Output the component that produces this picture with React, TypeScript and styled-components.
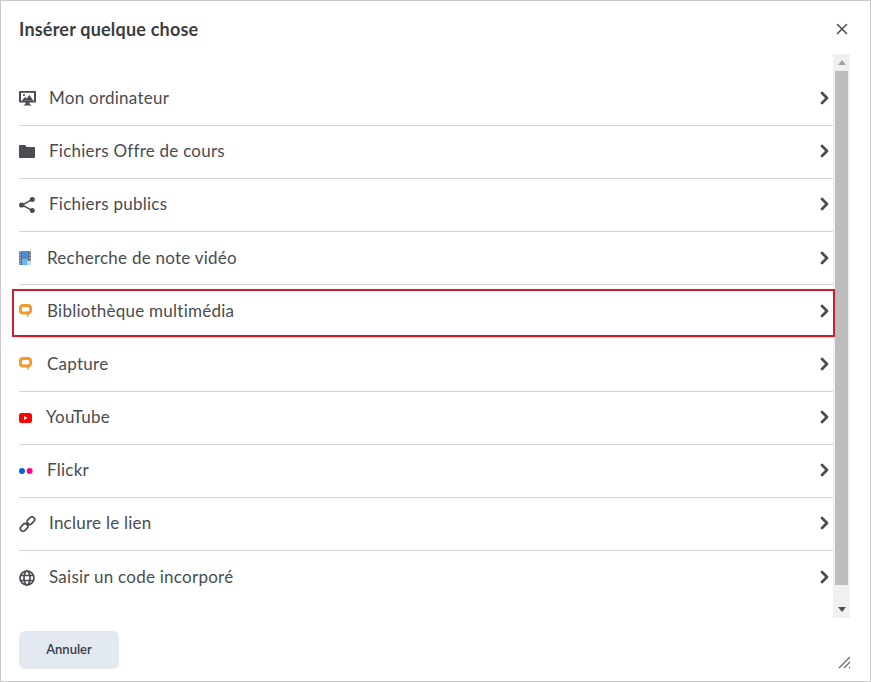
import React from "react";
import styled, { createGlobalStyle } from "styled-components";
import { X } from "lucide-react";

const Global = createGlobalStyle`
  html, body { margin: 0; padding: 0; background: #fff; }
  body { font-family: "Lato", "Liberation Sans", sans-serif; }
`;

const Dialog = styled.div`
  box-sizing: border-box;
  width: 871px;
  height: 682px;
  border: 1px solid #c9c9c9;
  background: #fff;
  display: flex;
  flex-direction: column;
  position: relative;
`;
const Header = styled.header`
  height: 53px;
  padding: 0 18px;
  display: flex;
  align-items: center;
  justify-content: space-between;
`;
const Title = styled.h1`
  margin: 2px 0 0;
  font-size: 18px;
  font-weight: 700;
  letter-spacing: 0.2px;
  color: #3a3d41;
`;
const Close = styled.button`
  border: 0;
  background: none;
  padding: 0;
  margin: 2px 1px 0 0;
  display: flex;
  color: #494c50;
`;
const Body = styled.div`
  height: 564px;
  padding-left: 18px;
  padding-right: 20px;
  display: flex;
`;
const List = styled.ul`
  flex: 1;
  margin: 0;
  padding: 18.58px 0 0;
  list-style: none;
`;
const Row = styled.li`
  box-sizing: border-box;
  height: 53.167px;
  display: flex;
  align-items: center;
  padding-right: 1px;
  border-bottom: 1px solid #cdd5dc;
  &:last-child { border-bottom: 0; }
`;
const IconSlot = styled.span<{ $w: number }>`
  width: ${(p) => p.$w}px;
  flex: none;
  display: flex;
  align-items: center;
`;
const Label = styled.span`
  flex: 1;
  font-size: 17px;
  line-height: 20px;
  letter-spacing: 0.25px;
  color: #494c4f;
  margin-top: -1.16px;
`;
const Chevron = styled.svg`
  display: block;
  flex: none;
  margin-top: -1px;
`;
const ChevronGap = styled.span`
  width: 3px;
  flex: none;
`;
const Scrollbar = styled.div`
  box-sizing: border-box;
  width: 17px;
  flex: none;
  background: #f0f0f0;
  display: flex;
  flex-direction: column;
  align-items: center;
`;
const ScrollArrow = styled.div`
  height: 17px;
  display: flex;
  align-items: center;
  justify-content: center;
  flex: none;
`;
const Thumb = styled.div`
  width: 13px;
  flex: 1;
  background: #bdbdbd;
  margin-bottom: 16px;
`;
const Footer = styled.footer`
  flex: 1;
  padding: 13px 18px 0;
  display: flex;
  align-items: flex-start;
  position: relative;
`;
const CancelButton = styled.button`
  width: 100px;
  height: 38px;
  border: 0;
  border-radius: 6px;
  background: #e3e9f1;
  font-family: "Lato", sans-serif;
  font-size: 13px;
  font-weight: 600;
  color: #3a3d41;
  padding-bottom: 3px;
`;
const Grip = styled.svg`
  position: absolute;
  right: 19px;
  bottom: 12px;
`;
const Highlight = styled.div`
  position: absolute;
  left: 11px;
  top: 288px;
  width: 823px;
  height: 48px;
  box-sizing: border-box;
  border: 2px solid #c8202c;
  pointer-events: none;
`;

const Monitor = () => (
  <svg width="17" height="15" viewBox="0 0 17 15">
    <path fill="#494c50" d="M1 0h15a1 1 0 0 1 1 1v9.500a1 1 0 0 1-1 1h-5.500v1.500l2.500 1.500H4l2.500-1.500v-1.500H1a1 1 0 0 1-1-1V1a1 1 0 0 1 1-1z" />
    <path fill="#fff" d="M2 1.800h13v8H2z" />
    <path fill="#494c50" d="M2.500 9.800l3.500-3.800 1.800 1.500 2.500-3.500 4.200 5.800z" />
    <circle cx="5" cy="4" r="1.100" fill="#494c50" />
  </svg>
);
const Folder = () => (
  <svg width="16" height="13" viewBox="0 0 16 13">
    <path fill="#494c50" d="M1 0h5l1.800 2H15a1 1 0 0 1 1 1v9a1 1 0 0 1-1 1H1a1 1 0 0 1-1-1V1a1 1 0 0 1 1-1z" />
  </svg>
);
const Share = () => (
  <svg width="16" height="16" viewBox="0 0 16 16">
    <path stroke="#494c50" strokeWidth="1.500" fill="none" d="M13 2.700 3 8l10 5.300" />
    <circle cx="13.300" cy="2.600" r="2.500" fill="#494c50" />
    <circle cx="2.600" cy="8" r="2.600" fill="#494c50" />
    <circle cx="13.300" cy="13.400" r="2.500" fill="#494c50" />
  </svg>
);
const Film = () => (
  <svg width="12" height="14" viewBox="0 0 12 14">
    <rect width="12" height="14" fill="#6b747c" />
    <rect x="3" y="0" width="6" height="6.500" fill="#3f8fe6" />
    <rect x="3" y="7.500" width="6" height="6.500" fill="#62b4f2" />
    <rect x="8" y="10" width="4" height="4" fill="#bfe0f5" />
    <path stroke="#d5d9dc" strokeDasharray="1.500 1.500" d="M1 0v14M11 0v10" />
  </svg>
);
const Bubble = () => (
  <svg width="13" height="14" viewBox="0 0 13 14">
    <path fill="#f49a2c" fillRule="evenodd" d="M4 0h5a4 4 0 0 1 4 4v2.500a4 4 0 0 1-3 3.900L8.600 13.500 7.800 10.500H4a4 4 0 0 1-4-4V4a4 4 0 0 1 4-4zM4.300 3A1.500 1.500 0 0 0 2.800 4.500v1.500A1.500 1.500 0 0 0 4.300 7.500h4.500A1.500 1.500 0 0 0 10.300 6V4.500A1.500 1.500 0 0 0 8.800 3z" />
  </svg>
);
const YouTube = () => (
  <svg width="13" height="10" viewBox="0 0 13 10">
    <rect width="13" height="10" rx="2.500" fill="#f00" />
    <path fill="#fff" d="M5 3l3.500 2L5 7z" />
  </svg>
);
const Flickr = () => (
  <svg width="14" height="6" viewBox="0 0 14 6">
    <circle cx="3" cy="3" r="3" fill="#0063dc" />
    <circle cx="10.600" cy="3" r="3" fill="#ff0084" />
  </svg>
);
const LinkIcon = () => (
  <svg width="17" height="16" viewBox="0 0 17 16" fill="none" stroke="#494c50" strokeWidth="1.700">
    <rect x="0.900" y="8.700" width="8.500" height="5.400" rx="2.700" transform="rotate(-45 5.100 11.400)" />
    <rect x="7.600" y="2" width="8.500" height="5.400" rx="2.700" transform="rotate(-45 11.800 4.700)" />
    <path d="M7.200 9.200l2.500-2.500" />
  </svg>
);
const Globe = () => (
  <svg width="16" height="16" viewBox="0 0 16 16" fill="none" stroke="#494c50" strokeWidth="1.700">
    <circle cx="8" cy="8" r="7" />
    <ellipse cx="8" cy="8" rx="3" ry="7" />
    <path d="M1.500 5.500h13M1.500 10.500h13" />
  </svg>
);

const items = [
  { label: "Mon ordinateur", icon: <Monitor />, w: 30 },
  { label: "Fichiers Offre de cours", icon: <Folder />, w: 30 },
  { label: "Fichiers publics", icon: <Share />, w: 30 },
  { label: "Recherche de note vidéo", icon: <Film />, w: 28 },
  { label: "Bibliothèque multimédia", icon: <Bubble />, w: 28 },
  { label: "Capture", icon: <Bubble />, w: 28 },
  { label: "YouTube", icon: <YouTube />, w: 27 },
  { label: "Flickr", icon: <Flickr />, w: 28 },
  { label: "Inclure le lien", icon: <LinkIcon />, w: 30 },
  { label: "Saisir un code incorporé", icon: <Globe />, w: 30 },
];

export default function App() {
  return (
    <Dialog>
      <Global />
      <Header>
        <Title>Insérer quelque chose</Title>
        <Close aria-label="Fermer"><X size={18} strokeWidth={2} /></Close>
      </Header>
      <Body>
        <List>
          {items.map((it) => (
            <Row key={it.label}>
              <IconSlot $w={it.w}>{it.icon}</IconSlot>
              <Label>{it.label}</Label>
              <Chevron width="9" height="14" viewBox="0 0 9 14" fill="none" stroke="#494c50" strokeWidth="2.800" strokeLinecap="round" strokeLinejoin="round">
                <path d="M2 2l5 5-5 5" />
              </Chevron>
              <ChevronGap />
            </Row>
          ))}
        </List>
        <Scrollbar>
          <ScrollArrow>
            <svg width="8" height="5" viewBox="0 0 8 5"><path fill="#a3a3a3" d="M4 0l4 5H0z" /></svg>
          </ScrollArrow>
          <Thumb />
          <ScrollArrow>
            <svg width="8" height="5" viewBox="0 0 8 5"><path fill="#505050" d="M0 0h8L4 5z" /></svg>
          </ScrollArrow>
        </Scrollbar>
      </Body>
      <Footer>
        <CancelButton>Annuler</CancelButton>
        <Grip width="13" height="13" viewBox="0 0 13 13" fill="none" stroke="#6a6e72" strokeWidth="1.300">
          <path d="M1 12 12 1M6 12l6-6M11 12l1-1" />
        </Grip>
      </Footer>
      <Highlight />
    </Dialog>
  );
}
